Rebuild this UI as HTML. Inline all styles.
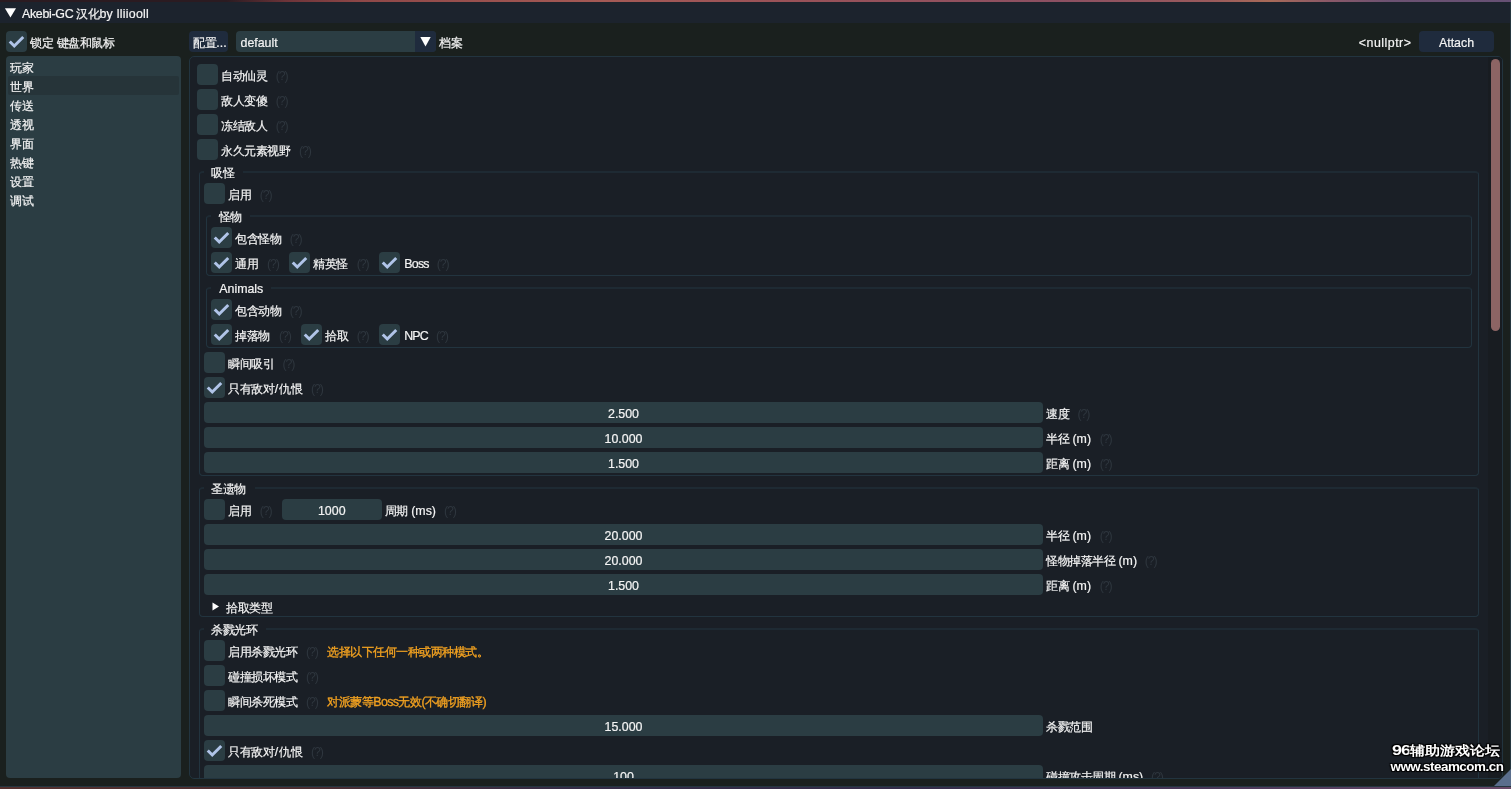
<!DOCTYPE html>
<html><head><meta charset="utf-8"><title>Akebi-GC</title>
<style>
html,body{margin:0;padding:0;}
body{width:1511px;height:789px;overflow:hidden;position:relative;background:#1a201e;
font-family:"Liberation Sans",sans-serif;font-size:12px;letter-spacing:-0.5px;color:#f4f4f4;}
div,svg{position:absolute;box-sizing:border-box;}
.ab{position:absolute;}
.t{white-space:nowrap;line-height:16px;height:16px;-webkit-text-stroke:0.2px #f4f4f4;}
.dim{-webkit-text-stroke:0 !important;}
.t .a{font-size:12.4px;letter-spacing:0;}
.c{text-align:center;}
.wm{white-space:nowrap;font-weight:bold;color:#fff;line-height:18px;height:18px;letter-spacing:0;}
.sq .a{letter-spacing:inherit;}
.dim .a{font-size:12.4px;letter-spacing:-1.1px;}
.dim{color:#2e363e;}
.or{color:#f0a020;-webkit-text-stroke:0.35px #f0a020;}
.or .a{letter-spacing:-0.6px;}
.f{background:#2b3d43;border-radius:4px;}
.b{background:#1f2b3d;border-radius:4px;}
.g{border:1px solid #22343f;border-top:2px solid #1e2a33;border-radius:4px;}
#child{left:189px;top:56px;width:1314px;height:723px;background:#1a1f26;border:1px solid #22343f;border-radius:5px;overflow:hidden;}
#inner{left:-190px;top:-57px;width:1511px;height:789px;}
#root{left:0;top:0;width:1511px;height:789px;will-change:transform;}
</style></head><body><div id="root">

<div style="left:0;top:0;width:1511px;height:2px;background:linear-gradient(90deg,#2b1b21 0%,#2b1b21 15%,#6e3439 19%,#8f4848 24%,#a55a55 40%,#9a5258 52%,#8c5062 70%,#9a5a5c 80%,#a86a58 84%,#8a5868 88%,#6c5272 92%,#665074 100%)"></div>
<div class="ab" style="left:0px;top:2px;width:1511px;height:21px;background:#1c232d;"></div>
<svg class="ab" style="left:0;top:0" width="30" height="24"><path d="M4.9 8.3 L16 8.3 L10.45 17.6 Z" fill="#fff"/></svg>
<div class="t" style="left:22px;top:5.75px"><span class="a" style="letter-spacing:-0.3px">Akebi-GC </span>汉化<span class="a" style="letter-spacing:0.25px">by lliiooll</span></div>
<div style="left:0;top:787px;width:1511px;height:2px;background:linear-gradient(90deg,#54302e 0%,#4c2e30 20%,#352c46 38%,#332c48 60%,#4a3858 80%,#6a4a68 100%)"></div>
<div style="left:0;top:786px;width:1511px;height:1px;background:#24363f"></div>
<div style="left:1510px;top:2px;width:1px;height:785px;background:#24363f"></div>
<div class="f" style="left:6px;top:31px;width:21px;height:21px;"></div>
<svg class="ab" style="left:6px;top:31px" width="21" height="21" viewBox="0 0 21 21"><path d="M3.75 10.5 L8.25 15 L17.25 6" fill="none" stroke="#b0c4e8" stroke-width="3"/></svg>
<div class="t " style="left:30.25px;top:34.75px;">锁定<span class="a"> </span>键盘和鼠标</div>
<div class="f" style="left:6px;top:56px;width:175px;height:722px;"></div>
<div class="ab" style="left:8px;top:76px;width:171px;height:19px;background:#263439;border-radius:2px;"></div>
<div class="t " style="left:10.25px;top:60px;">玩家</div>
<div class="t " style="left:10.25px;top:79px;">世界</div>
<div class="t " style="left:10.25px;top:98px;">传送</div>
<div class="t " style="left:10.25px;top:117px;">透视</div>
<div class="t " style="left:10.25px;top:136px;">界面</div>
<div class="t " style="left:10.25px;top:155px;">热键</div>
<div class="t " style="left:10.25px;top:174px;">设置</div>
<div class="t " style="left:10.25px;top:193px;">调试</div>
<div class="b" style="left:189px;top:31px;width:39px;height:21px;"></div>
<div class="t " style="left:193.25px;top:34.75px;">配置<span class="a">...</span></div>
<div class="f" style="left:236px;top:31px;width:200px;height:21px;"></div>
<div class="ab" style="left:415px;top:31px;width:21px;height:21px;background:#1f2b3d;border-radius:0 4px 4px 0;"></div>
<svg class="ab" style="left:415px;top:31px" width="21" height="21"><path d="M5.3 6 L15.7 6 L10.5 15.5 Z" fill="#fff"/></svg>
<div class="t " style="left:240.5px;top:34.75px;"><span class="a">default</span></div>
<div class="t " style="left:439px;top:34.75px;">档案</div>
<div class="t  sq" style="left:1358.75px;top:34.75px;letter-spacing:0.5px;"><span class="a">&lt;nullptr&gt;</span></div>
<div class="b" style="left:1419px;top:31px;width:75px;height:21px;"></div>
<div class="t c " style="left:1419px;top:34.75px;width:75px"><span class="a">Attach</span></div>
<div id="child"><div id="inner">
<div class="ab" style="left:1488px;top:57px;width:14px;height:721px;background:#181c21;"></div>
<div class="ab" style="left:1491px;top:59px;width:9px;height:272px;background:#8c6464;border-radius:4.5px;"></div>
<div class="f" style="left:197px;top:64px;width:21px;height:21px;"></div>
<div class="t " style="left:221px;top:67.75px;">自动仙灵</div>
<div class="t dim" style="left:275.75px;top:67.75px;"><span class="a">(?)</span></div>
<div class="f" style="left:197px;top:89px;width:21px;height:21px;"></div>
<div class="t " style="left:221px;top:92.75px;">敌人变傻</div>
<div class="t dim" style="left:275.75px;top:92.75px;"><span class="a">(?)</span></div>
<div class="f" style="left:197px;top:114px;width:21px;height:21px;"></div>
<div class="t " style="left:221px;top:117.75px;">冻结敌人</div>
<div class="t dim" style="left:275.75px;top:117.75px;"><span class="a">(?)</span></div>
<div class="f" style="left:197px;top:139px;width:21px;height:21px;"></div>
<div class="t " style="left:221px;top:142.75px;">永久元素视野</div>
<div class="t dim" style="left:299px;top:142.75px;"><span class="a">(?)</span></div>
<div class="g" style="left:199px;top:171px;width:1280px;height:304.75px;"></div>
<div class="ab" style="left:204.1px;top:170px;width:38.9px;height:4px;background:#1a1f26;"></div>
<div class="t " style="left:211.25px;top:165.2px;">吸怪</div>
<div class="f" style="left:204px;top:183px;width:21px;height:21px;"></div>
<div class="t " style="left:228px;top:186.75px;">启用</div>
<div class="t dim" style="left:259.75px;top:186.75px;"><span class="a">(?)</span></div>
<div class="g" style="left:206px;top:215px;width:1266px;height:60.5px;"></div>
<div class="ab" style="left:211.1px;top:214px;width:38.9px;height:4px;background:#1a1f26;"></div>
<div class="t " style="left:218.5px;top:209.2px;">怪物</div>
<div class="f" style="left:211px;top:227px;width:21px;height:21px;"></div>
<svg class="ab" style="left:211px;top:227px" width="21" height="21" viewBox="0 0 21 21"><path d="M3.75 10.5 L8.25 15 L17.25 6" fill="none" stroke="#b0c4e8" stroke-width="3"/></svg>
<div class="t " style="left:235px;top:230.75px;">包含怪物</div>
<div class="t dim" style="left:289.75px;top:230.75px;"><span class="a">(?)</span></div>
<div class="f" style="left:211px;top:252px;width:21px;height:21px;"></div>
<svg class="ab" style="left:211px;top:252px" width="21" height="21" viewBox="0 0 21 21"><path d="M3.75 10.5 L8.25 15 L17.25 6" fill="none" stroke="#b0c4e8" stroke-width="3"/></svg>
<div class="t " style="left:235px;top:255.75px;">通用</div>
<div class="t dim" style="left:267px;top:255.75px;"><span class="a">(?)</span></div>
<div class="f" style="left:289px;top:252px;width:21px;height:21px;"></div>
<svg class="ab" style="left:289px;top:252px" width="21" height="21" viewBox="0 0 21 21"><path d="M3.75 10.5 L8.25 15 L17.25 6" fill="none" stroke="#b0c4e8" stroke-width="3"/></svg>
<div class="t " style="left:313px;top:255.75px;">精英怪</div>
<div class="t dim" style="left:356.75px;top:255.75px;"><span class="a">(?)</span></div>
<div class="f" style="left:379px;top:252px;width:21px;height:21px;"></div>
<svg class="ab" style="left:379px;top:252px" width="21" height="21" viewBox="0 0 21 21"><path d="M3.75 10.5 L8.25 15 L17.25 6" fill="none" stroke="#b0c4e8" stroke-width="3"/></svg>
<div class="t  sq" style="left:404.25px;top:255.75px;letter-spacing:-0.75px;"><span class="a">Boss</span></div>
<div class="t dim" style="left:436.75px;top:255.75px;"><span class="a">(?)</span></div>
<div class="g" style="left:206px;top:287px;width:1266px;height:61px;"></div>
<div class="ab" style="left:211.1px;top:286px;width:59.9px;height:4px;background:#1a1f26;"></div>
<div class="t " style="left:219.25px;top:281.2px;"><span class="a">Animals</span></div>
<div class="f" style="left:211px;top:299px;width:21px;height:21px;"></div>
<svg class="ab" style="left:211px;top:299px" width="21" height="21" viewBox="0 0 21 21"><path d="M3.75 10.5 L8.25 15 L17.25 6" fill="none" stroke="#b0c4e8" stroke-width="3"/></svg>
<div class="t " style="left:235px;top:302.75px;">包含动物</div>
<div class="t dim" style="left:289.75px;top:302.75px;"><span class="a">(?)</span></div>
<div class="f" style="left:211px;top:324px;width:21px;height:21px;"></div>
<svg class="ab" style="left:211px;top:324px" width="21" height="21" viewBox="0 0 21 21"><path d="M3.75 10.5 L8.25 15 L17.25 6" fill="none" stroke="#b0c4e8" stroke-width="3"/></svg>
<div class="t " style="left:235px;top:327.75px;">掉落物</div>
<div class="t dim" style="left:279px;top:327.75px;"><span class="a">(?)</span></div>
<div class="f" style="left:301px;top:324px;width:21px;height:21px;"></div>
<svg class="ab" style="left:301px;top:324px" width="21" height="21" viewBox="0 0 21 21"><path d="M3.75 10.5 L8.25 15 L17.25 6" fill="none" stroke="#b0c4e8" stroke-width="3"/></svg>
<div class="t " style="left:325px;top:327.75px;">拾取</div>
<div class="t dim" style="left:356.75px;top:327.75px;"><span class="a">(?)</span></div>
<div class="f" style="left:379px;top:324px;width:21px;height:21px;"></div>
<svg class="ab" style="left:379px;top:324px" width="21" height="21" viewBox="0 0 21 21"><path d="M3.75 10.5 L8.25 15 L17.25 6" fill="none" stroke="#b0c4e8" stroke-width="3"/></svg>
<div class="t  sq" style="left:404.25px;top:327.75px;letter-spacing:-0.85px;"><span class="a">NPC</span></div>
<div class="t dim" style="left:436px;top:327.75px;"><span class="a">(?)</span></div>
<div class="f" style="left:204px;top:352px;width:21px;height:21px;"></div>
<div class="t " style="left:228px;top:355.75px;">瞬间吸引</div>
<div class="t dim" style="left:282.5px;top:355.75px;"><span class="a">(?)</span></div>
<div class="f" style="left:204px;top:377px;width:21px;height:21px;"></div>
<svg class="ab" style="left:204px;top:377px" width="21" height="21" viewBox="0 0 21 21"><path d="M3.75 10.5 L8.25 15 L17.25 6" fill="none" stroke="#b0c4e8" stroke-width="3"/></svg>
<div class="t " style="left:228px;top:380.75px;">只有敌对<span class="a" style="padding:0 0.8px">/</span>仇恨</div>
<div class="t dim" style="left:311px;top:380.75px;"><span class="a">(?)</span></div>
<div class="f" style="left:204px;top:402px;width:839px;height:21px;"></div>
<div class="t c " style="left:204px;top:405.75px;width:839px"><span class="a">2.500</span></div>
<div class="t " style="left:1046px;top:405.75px;">速度</div>
<div class="t dim" style="left:1077.5px;top:405.75px;"><span class="a">(?)</span></div>
<div class="f" style="left:204px;top:427px;width:839px;height:21px;"></div>
<div class="t c " style="left:204px;top:430.75px;width:839px"><span class="a">10.000</span></div>
<div class="t " style="left:1046px;top:430.75px;">半径<span class="a"> (m)</span></div>
<div class="t dim" style="left:1099.75px;top:430.75px;"><span class="a">(?)</span></div>
<div class="f" style="left:204px;top:452px;width:839px;height:21px;"></div>
<div class="t c " style="left:204px;top:455.75px;width:839px"><span class="a">1.500</span></div>
<div class="t " style="left:1046px;top:455.75px;">距离<span class="a"> (m)</span></div>
<div class="t dim" style="left:1099.75px;top:455.75px;"><span class="a">(?)</span></div>
<div class="g" style="left:199px;top:487px;width:1280px;height:129.75px;"></div>
<div class="ab" style="left:204.1px;top:486px;width:50.9px;height:4px;background:#1a1f26;"></div>
<div class="t " style="left:211.25px;top:481.2px;">圣遗物</div>
<div class="f" style="left:204px;top:499px;width:21px;height:21px;"></div>
<div class="t " style="left:228px;top:502.75px;">启用</div>
<div class="t dim" style="left:259.75px;top:502.75px;"><span class="a">(?)</span></div>
<div class="f" style="left:282px;top:499px;width:99.5px;height:21px;"></div>
<div class="t c " style="left:282px;top:502.75px;width:99.5px"><span class="a">1000</span></div>
<div class="t " style="left:384.75px;top:502.75px;">周期<span class="a"> (ms)</span></div>
<div class="t dim" style="left:444px;top:502.75px;"><span class="a">(?)</span></div>
<div class="f" style="left:204px;top:524px;width:839px;height:21px;"></div>
<div class="t c " style="left:204px;top:527.75px;width:839px"><span class="a">20.000</span></div>
<div class="t " style="left:1046px;top:527.75px;">半径<span class="a"> (m)</span></div>
<div class="t dim" style="left:1099.75px;top:527.75px;"><span class="a">(?)</span></div>
<div class="f" style="left:204px;top:549px;width:839px;height:21px;"></div>
<div class="t c " style="left:204px;top:552.75px;width:839px"><span class="a">20.000</span></div>
<div class="t " style="left:1046px;top:552.75px;">怪物掉落半径<span class="a"> (m)</span></div>
<div class="t dim" style="left:1144.75px;top:552.75px;"><span class="a">(?)</span></div>
<div class="f" style="left:204px;top:574px;width:839px;height:21px;"></div>
<div class="t c " style="left:204px;top:577.75px;width:839px"><span class="a">1.500</span></div>
<div class="t " style="left:1046px;top:577.75px;">距离<span class="a"> (m)</span></div>
<div class="t dim" style="left:1099.75px;top:577.75px;"><span class="a">(?)</span></div>
<svg class="ab" style="left:210px;top:600px" width="12" height="14"><path d="M2.5 2.5 L9 6.5 L2.5 10.5 Z" fill="#fff"/></svg>
<div class="t " style="left:226.25px;top:600px;">拾取类型</div>
<div class="g" style="left:199px;top:628px;width:1280px;height:172.5px;border-bottom:none;border-radius:4px 4px 0 0;"></div>
<div class="ab" style="left:204.1px;top:627px;width:61.9px;height:4px;background:#1a1f26;"></div>
<div class="t " style="left:211.25px;top:622.2px;">杀戮光环</div>
<div class="f" style="left:204px;top:640px;width:21px;height:21px;"></div>
<div class="t " style="left:228px;top:643.75px;">启用杀戮光环</div>
<div class="t dim" style="left:306px;top:643.75px;"><span class="a">(?)</span></div>
<div class="t or" style="left:327.25px;top:643.75px;">选择以下任何一种或两种模式。</div>
<div class="f" style="left:204px;top:665px;width:21px;height:21px;"></div>
<div class="t " style="left:228px;top:668.75px;">碰撞损坏模式</div>
<div class="t dim" style="left:306px;top:668.75px;"><span class="a">(?)</span></div>
<div class="f" style="left:204px;top:690px;width:21px;height:21px;"></div>
<div class="t " style="left:228px;top:693.75px;">瞬间杀死模式</div>
<div class="t dim" style="left:306px;top:693.75px;"><span class="a">(?)</span></div>
<div class="t or" style="left:327.25px;top:693.75px;">对派蒙等<span class="a">Boss</span>无效<span class="a">(</span>不确切翻译<span class="a">)</span></div>
<div class="f" style="left:204px;top:715px;width:839px;height:21px;"></div>
<div class="t c " style="left:204px;top:718.75px;width:839px"><span class="a">15.000</span></div>
<div class="t " style="left:1046px;top:718.75px;">杀戮范围</div>
<div class="f" style="left:204px;top:740px;width:21px;height:21px;"></div>
<svg class="ab" style="left:204px;top:740px" width="21" height="21" viewBox="0 0 21 21"><path d="M3.75 10.5 L8.25 15 L17.25 6" fill="none" stroke="#b0c4e8" stroke-width="3"/></svg>
<div class="t " style="left:228px;top:743.75px;">只有敌对<span class="a" style="padding:0 0.8px">/</span>仇恨</div>
<div class="t dim" style="left:311px;top:743.75px;"><span class="a">(?)</span></div>
<div class="f" style="left:204px;top:765px;width:839px;height:21px;"></div>
<div class="t c " style="left:204px;top:768.75px;width:839px"><span class="a">100</span></div>
<div class="t " style="left:1046px;top:768.75px;">碰撞攻击周期<span class="a"> (ms)</span></div>
<div class="t dim" style="left:1151px;top:768.75px;"><span class="a">(?)</span></div>
</div></div>
<svg class="ab" style="left:1493px;top:768px" width="18" height="18"><path d="M18 1 L18 18 L1 18 Z" fill="#5a6e8c"/></svg>
<div class="wm" style="left:1391.5px;top:741px;font-size:13px;transform:scaleX(1.155);transform-origin:0 0;text-shadow:1px 1px 1px #000,-1px -1px 1px #000,1px -1px 1px #000,-1px 1px 1px #000;"><span style="font-size:15.5px;letter-spacing:-0.8px">96</span>辅助游戏论坛</div>
<div class="wm" style="left:1390.5px;top:758px;font-size:13.4px;letter-spacing:-0.48px;text-shadow:1px 1px 1px #000,-1px -1px 1px #000,1px -1px 1px #000,-1px 1px 1px #000;">www.steamcom.cn</div>
</div></body></html>
